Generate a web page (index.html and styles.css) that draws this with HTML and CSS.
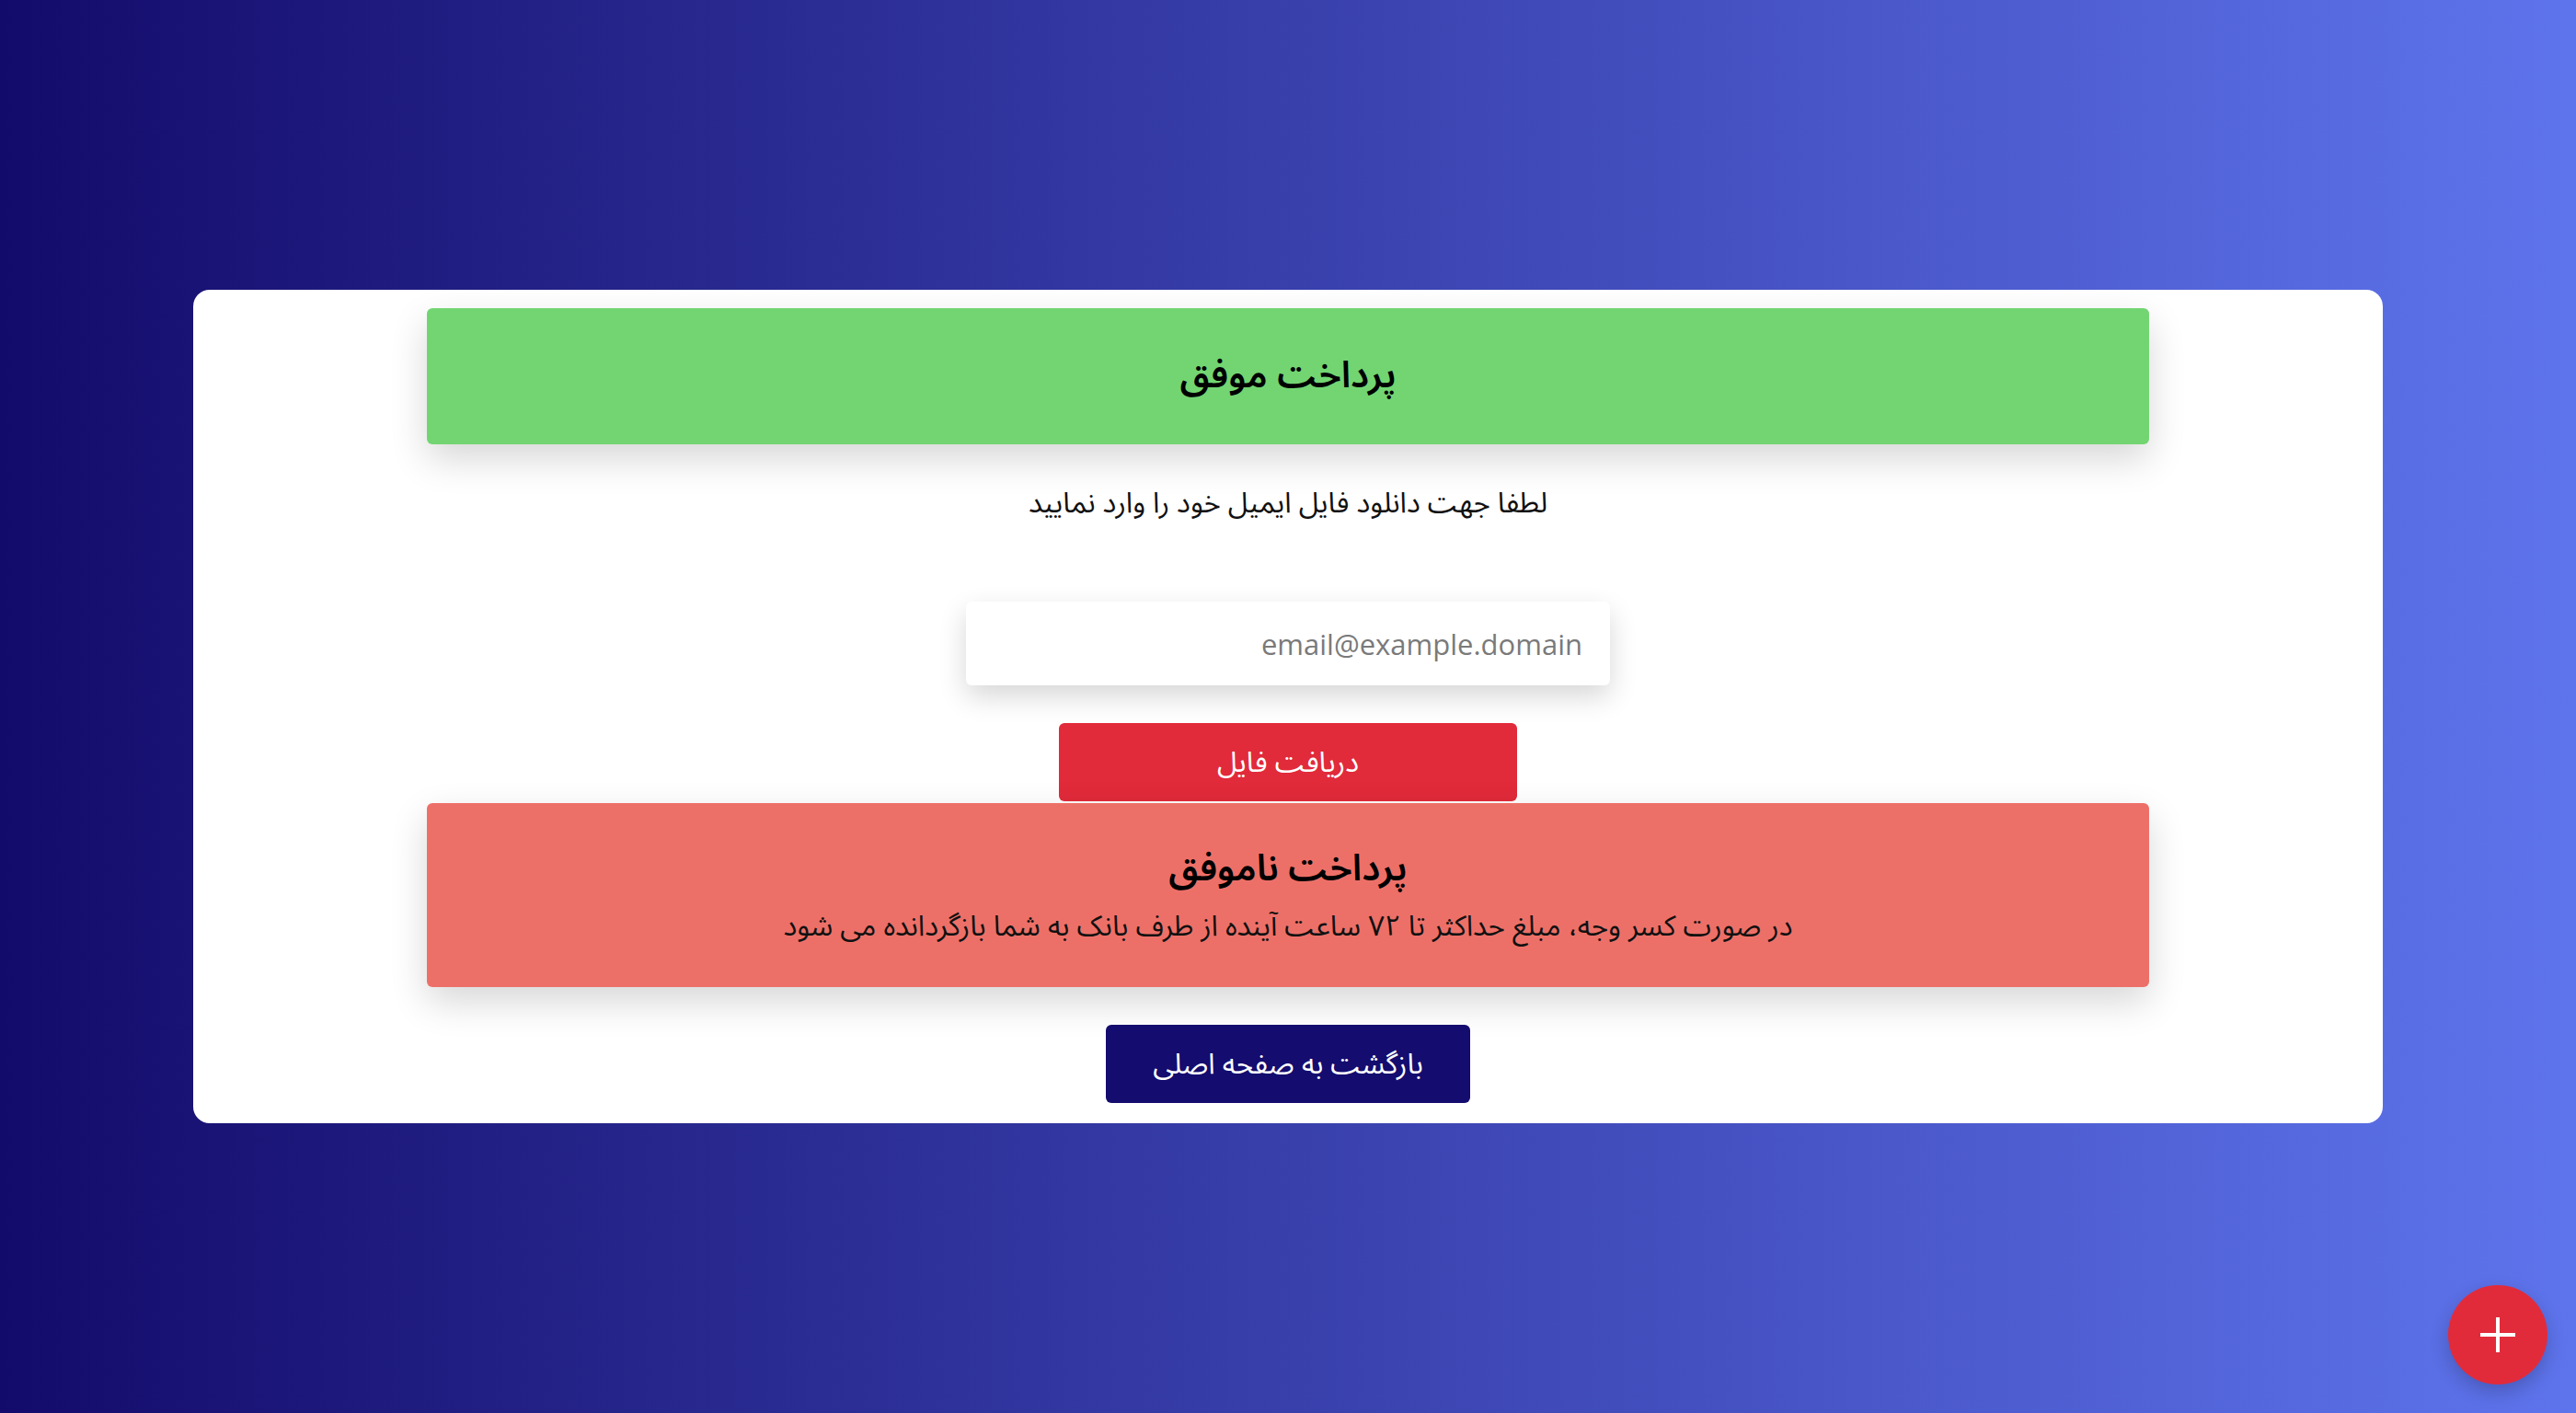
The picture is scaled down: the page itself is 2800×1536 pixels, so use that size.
FILE: index.html
```html
<!DOCTYPE html>
<html lang="fa" dir="rtl">
<head>
<meta charset="utf-8">
<title>نتیجه پرداخت</title>
<link rel="stylesheet" href="styles.css">
</head>
<body>
<main class="card">
  <section class="alert alert-success">
    <h2 class="alert-title">پرداخت موفق</h2>
  </section>
  <p class="hint">لطفا جهت دانلود فایل ایمیل خود را وارد نمایید</p>
  <input class="email" type="email" placeholder="email@example.domain">
  <button class="btn btn-red">دریافت فایل</button>
  <section class="alert alert-fail">
    <h2 class="alert-title">پرداخت ناموفق</h2>
    <p class="alert-text">در صورت کسر وجه، مبلغ حداکثر تا ۷۲ ساعت آینده از طرف بانک به شما بازگردانده می شود</p>
  </section>
  <button class="btn btn-navy">بازگشت به صفحه اصلی</button>
</main>
<button class="fab" aria-label="add"><span class="fab-h"></span><span class="fab-v"></span></button>
</body>
</html>
```
FILE: styles.css
```css
* { box-sizing: border-box; }
html, body { margin: 0; height: 100%; }
body {
  display: flex;
  align-items: center;
  justify-content: center;
  background: linear-gradient(to right, #130b6b 0%, #5e74ec 100%);
  font-family: "Noto Sans Arabic", "DejaVu Sans", sans-serif;
  color: #111;
}
.card {
  width: 2380px;
  background: #fff;
  border-radius: 18px;
  padding: 20px 0 22px;
  display: flex;
  flex-direction: column;
  align-items: center;
}
.alert {
  width: 1872px;
  border-radius: 6px;
  box-shadow: 0 16px 40px rgba(0, 0, 0, 0.16);
  text-align: center;
}
.alert-success {
  height: 148px;
  background: #72d572;
  display: flex;
  align-items: center;
  justify-content: center;
}
.alert-title {
  margin: 0;
  font-size: 40px;
  line-height: 44px;
  font-weight: 600;
  color: #000;
}
.hint {
  margin: 44px 0 87px;
  font-size: 31px;
  line-height: 40px;
  color: #111;
}
.email {
  width: 700px;
  height: 91px;
  border: none;
  border-radius: 6px;
  background: #fff;
  box-shadow: 0 12px 30px rgba(0, 0, 0, 0.16);
  padding: 0 30px;
  font-family: "Open Sans", sans-serif;
  font-size: 31px;
  text-align: right;
  direction: ltr;
  outline: none;
}
.email::placeholder { color: #7a7a7a; }
.btn {
  border: none;
  border-radius: 6px;
  height: 85px;
  font-family: inherit;
  font-size: 31px;
  line-height: 40px;
  color: #fff;
}
.btn-red {
  width: 498px;
  margin-top: 41px;
  margin-bottom: 2px;
  background: #e12a3a;
}
.alert-fail {
  height: 200px;
  background: #ed7068;
  padding-top: 50px;
}
.alert-text {
  margin: 20px 0 0;
  font-size: 31px;
  line-height: 40px;
  color: #111;
}
.btn-navy {
  width: 396px;
  margin-top: 41px;
  background: #140c6e;
}
.fab {
  position: fixed;
  right: 31px;
  bottom: 31px;
  width: 108px;
  height: 108px;
  border: none;
  border-radius: 50%;
  background: #e22b3a;
  box-shadow: 0 8px 20px rgba(0, 0, 0, 0.2);
  padding: 0;
}
.fab-h, .fab-v {
  position: absolute;
  left: 50%;
  top: 50%;
  background: #fff;
  transform: translate(-50%, -50%);
}
.fab-h { width: 38px; height: 4px; }
.fab-v { width: 4px; height: 38px; }
```
